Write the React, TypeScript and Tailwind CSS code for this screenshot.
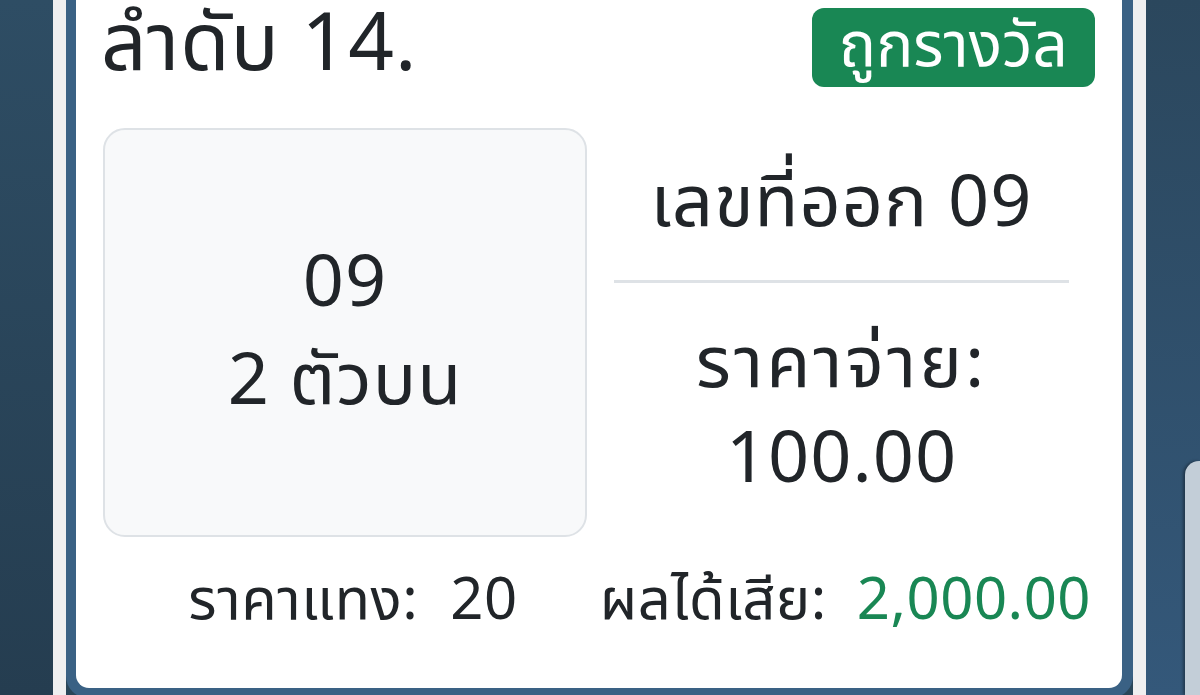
import React from "react";

const font = { fontFamily: '"Noto Sans Thai", "Noto Sans", "Liberation Sans", sans-serif' };

export default function App() {
  return (
    <div
      className="w-[1200px] h-[695px] overflow-hidden flex bg-[#2a4659] text-[#212529]"
      style={font}
    >
      {/* left backdrop */}
      <div className="w-[53px] shrink-0 h-full bg-gradient-to-b from-[#2e4d64] to-[#253d50]" />
      <div className="w-[13px] shrink-0 h-full bg-[#efeff0]" />

      {/* ticket card */}
      <div className="w-[1067px] shrink-0 h-[698px] bg-[#3a6184] pl-[10px] pr-[11px] pb-[10px] rounded-b-[22px]">
        <div className="h-full min-w-0 bg-white rounded-b-[13px] px-[27px] pt-[8px] flex flex-col">
          <div className="flex items-start justify-between">
            <div className="text-[80px] leading-[76px] tracking-[1px] -ml-[2px] whitespace-nowrap">ลำดับ 14.</div>
            <div className="bg-[#198754] text-white text-[62px] leading-[79px] h-[79px] px-[27px] rounded-[12px] whitespace-nowrap">
              ถูกรางวัล
            </div>
          </div>

          <div className="mt-[41px] flex">
            <div className="w-[484px] h-[409px] shrink-0 bg-[#f8f9fa] border-2 border-[#dee2e6] rounded-[22px] flex flex-col items-center justify-center text-[72px] leading-[98px] tracking-[1px] whitespace-nowrap">
              <div>09</div>
              <div>2 ตัวบน</div>
            </div>
            <div className="ml-[27px] w-[455px] shrink-0 flex flex-col items-center justify-center tracking-[1px] whitespace-nowrap pt-[6px]">
              <div className="text-[72px] leading-[80px]">เลขที่ออก 09</div>
              <div className="w-full h-[3px] bg-[#dee2e6] mt-[36px] mb-[35px]" />
              <div className="text-[72px] leading-[95px] text-center">
                <div className="tracking-[3px]">ราคาจ่าย:</div>
                <div>100.00</div>
              </div>
            </div>
          </div>

          <div className="mt-[29px] flex text-[58px] leading-[70px] tracking-[0.5px] whitespace-nowrap">
            <div className="w-[500px] shrink-0 flex justify-center gap-[32px]">
              <span>ราคาแทง:</span>
              <span>20</span>
            </div>
            <div className="flex-1 min-w-0 flex justify-end gap-[30px] pr-[4px]">
              <span>ผลได้เสีย:</span>
              <span className="text-[#198754]">2,000.00</span>
            </div>
          </div>
        </div>
      </div>

      {/* right backdrop */}
      <div className="w-[13px] shrink-0 h-full bg-[#efeff0]" />
      <div className="flex-1 h-full bg-gradient-to-b from-[#2b475d] to-[#34587a] flex flex-col">
        <div className="h-[461px]" />
        <div className="ml-[39px] flex-1 bg-[#c3ced8] rounded-tl-[14px] shadow-[-2px_0_3px_rgba(0,0,0,0.35)]" />
      </div>
    </div>
  );
}
